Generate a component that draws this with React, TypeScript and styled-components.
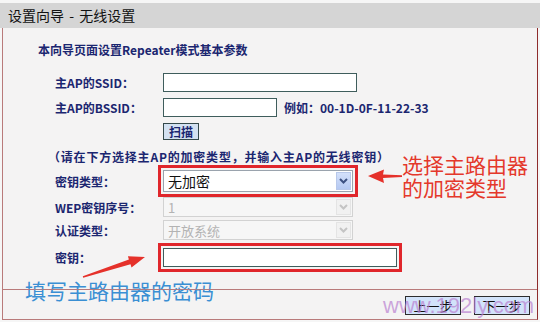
import React from 'react';
import styled, { createGlobalStyle } from 'styled-components';

const GlobalStyle = createGlobalStyle`
  html, body {
    margin: 0;
    padding: 0;
    background: #f6f6f6;
  }
  body {
    font-family: "Noto Sans CJK SC", "Noto Sans", sans-serif;
  }
`;

const Page = styled.div`
  position: relative;
  width: 540px;
  height: 322px;
  padding-top: 3px;
  box-sizing: border-box;
  overflow: hidden;
`;

const TitleBar = styled.div`
  height: 25px;
  line-height: 25px;
  padding-left: 8px;
  background: #d5d5d5;
  color: #111;
  font-size: 14px;
  word-spacing: 2px;
`;

const Panel = styled.div`
  margin: 0 2px;
  height: 292px;
  box-sizing: border-box;
  display: flex;
  flex-direction: column;
  background: #f4f3f3;
  border-left: 1px solid #b97a7a;
  border-right: 1px solid #8e2b2b;
  border-bottom: 1px solid #b97a7a;
`;

const Body = styled.div`
  height: 261px;
  padding-top: 15px;
  box-sizing: border-box;
`;

const Heading = styled.div`
  padding-left: 35px;
  height: 14px;
  line-height: 14px;
  font-size: 12px;
  font-weight: 700;
  color: #1b2670;
`;

const Row = styled.div<{ $h: number; $mt: number }>`
  display: flex;
  align-items: center;
  height: ${p => p.$h}px;
  margin-top: ${p => p.$mt}px;
  padding-left: 52px;
`;

const Label = styled.div`
  width: 108px;
  flex: none;
  font-size: 12px;
  font-weight: 700;
  color: #1b2670;
`;

const Note = styled.div`
  margin-left: -7px;
  font-size: 12px;
  font-weight: 700;
  color: #1b2670;
  letter-spacing: 0.8px;
`;

const TextInput = styled.div<{ $w: number; $mark?: boolean }>`
  width: ${p => p.$w}px;
  height: 100%;
  box-sizing: border-box;
  background: #fff;
  border: 1px solid #3f5d5c;
  outline: ${p => (p.$mark ? '3px solid #e0262b' : 'none')};
  outline-offset: 2px;
`;

const Hint = styled.span`
  margin-left: 7px;
  font-size: 12px;
  font-weight: 600;
  color: #1b2670;
`;

const ScanButton = styled.div`
  width: 36px;
  height: 100%;
  box-sizing: border-box;
  display: flex;
  align-items: center;
  justify-content: center;
  background: #d3e1f1;
  border: 1px solid #34494b;
  font-size: 12px;
  font-weight: 700;
  color: #1b2670;
`;

const SelectBox = styled.div<{ $disabled?: boolean; $mark?: boolean }>`
  width: 190px;
  height: 100%;
  box-sizing: border-box;
  display: flex;
  align-items: center;
  justify-content: space-between;
  padding: 1px 1px 1px 4px;
  background: ${p => (p.$disabled ? '#f6f6f6' : '#fff')};
  border: 1px solid ${p => (p.$disabled ? '#d2d2d2' : '#9aa3ad')};
  color: ${p => (p.$disabled ? '#b3b3b3' : '#111')};
  font-size: ${p => (p.$disabled ? 13 : 14)}px;
  outline: ${p => (p.$mark ? '3px solid #e0262b' : 'none')};
  outline-offset: 2px;
`;

const DropButton = styled.div<{ $disabled?: boolean }>`
  width: 15px;
  height: 100%;
  display: flex;
  align-items: center;
  justify-content: center;
  background: ${p => (p.$disabled ? '#f1f1f1' : 'linear-gradient(#d4e1fb, #b5c9f2)')};
  border: 1px solid ${p => (p.$disabled ? '#e4e4e4' : '#b8c8ea')};
  box-sizing: border-box;
  color: ${p => (p.$disabled ? '#c4c4c4' : '#3d5182')};
`;

const Footer = styled.div`
  flex: 1;
  display: flex;
  justify-content: flex-end;
  gap: 13px;
  padding: 6px 7px 0 0;
  border-top: 1px solid #b97a7a;
`;

const NavButton = styled.div`
  width: 56px;
  height: 19px;
  box-sizing: border-box;
  display: flex;
  align-items: center;
  justify-content: center;
  background: #d2e3fa;
  border: 1px solid #2c2c2c;
  font-size: 13px;
  color: #111;
`;

const Callout = styled.div<{ $color: string; $x: number; $y: number }>`
  position: absolute;
  left: ${p => p.$x}px;
  top: ${p => p.$y}px;
  font-size: 21px;
  line-height: 23px;
  color: ${p => p.$color};
  white-space: nowrap;
`;

// the footer rule runs across the blue callout in the screenshot
const CalloutRule = styled.div`
  position: absolute;
  left: 3px;
  top: 289px;
  width: 534px;
  height: 1px;
  background: rgba(185, 122, 122, 0.8);
  pointer-events: none;
`;

const Overlay = styled.svg`
  position: absolute;
  left: 0;
  top: 0;
  pointer-events: none;
`;

const Watermark = styled.div`
  position: absolute;
  left: 383px;
  top: 295px;
  font-family: "Liberation Sans", Arial, sans-serif;
  font-size: 22px;
  line-height: 22px;
  color: rgba(185, 128, 208, 0.7);
  pointer-events: none;
`;

const Chevron = () => (
  <svg width="11" height="8" viewBox="0 0 11 8">
    <path d="M2 2 L5.5 5.5 L9 2" fill="none" stroke="currentColor" strokeWidth="2" />
  </svg>
);

const Select = ({ value, disabled, mark }: { value: string; disabled?: boolean; mark?: boolean }) => (
  <SelectBox $disabled={disabled} $mark={mark}>
    <span>{value}</span>
    <DropButton $disabled={disabled}>
      <Chevron />
    </DropButton>
  </SelectBox>
);

export default function App() {
  return (
    <>
      <GlobalStyle />
      <Page>
        <TitleBar>设置向导 - 无线设置</TitleBar>
        <Panel>
          <Body>
            <Heading>本向导页面设置Repeater模式基本参数</Heading>
            <Row $h={19} $mt={16}>
              <Label>主AP的SSID：</Label>
              <TextInput $w={194} />
            </Row>
            <Row $h={19} $mt={6}>
              <Label>主AP的BSSID：</Label>
              <TextInput $w={114} />
              <Hint>例如：00-1D-0F-11-22-33</Hint>
            </Row>
            <Row $h={17} $mt={6}>
              <Label />
              <ScanButton>扫描</ScanButton>
            </Row>
            <Row $h={14} $mt={9}>
              <Note>（请在下方选择主AP的加密类型，并输入主AP的无线密钥）</Note>
            </Row>
            <Row $h={22} $mt={7}>
              <Label>密钥类型：</Label>
              <Select value="无加密" mark />
            </Row>
            <Row $h={20} $mt={5}>
              <Label>WEP密钥序号：</Label>
              <Select value="1" disabled />
            </Row>
            <Row $h={20} $mt={3}>
              <Label>认证类型：</Label>
              <Select value="开放系统" disabled />
            </Row>
            <Row $h={19} $mt={8}>
              <Label>密钥：</Label>
              <TextInput $w={234} $mark />
            </Row>
          </Body>
          <Footer>
            <NavButton>上一步</NavButton>
            <NavButton>下一步</NavButton>
          </Footer>
        </Panel>

        <Callout $color="#e4382b" $x={402} $y={153}>
          选择主路由器
          <br />
          的加密类型
        </Callout>
        <Callout $color="#3a8fd3" $x={25} $y={279}>
          填写主路由器的密码
        </Callout>
        <CalloutRule />

        <Overlay width="540" height="322" viewBox="0 0 540 322">
          <polygon
            fill="#e5312a"
            points="368,176 384,169.5 383,174.5 402,175.3 402,177 383,178 384,183"
          />
          <polygon
            fill="#e5312a"
            points="145,257 127.9,256.2 128.9,259.5 82.8,276.3 83.2,277.7 130.5,264.3 131.5,267.6"
          />
        </Overlay>

        <Watermark>www.192ly.com</Watermark>
      </Page>
    </>
  );
}
